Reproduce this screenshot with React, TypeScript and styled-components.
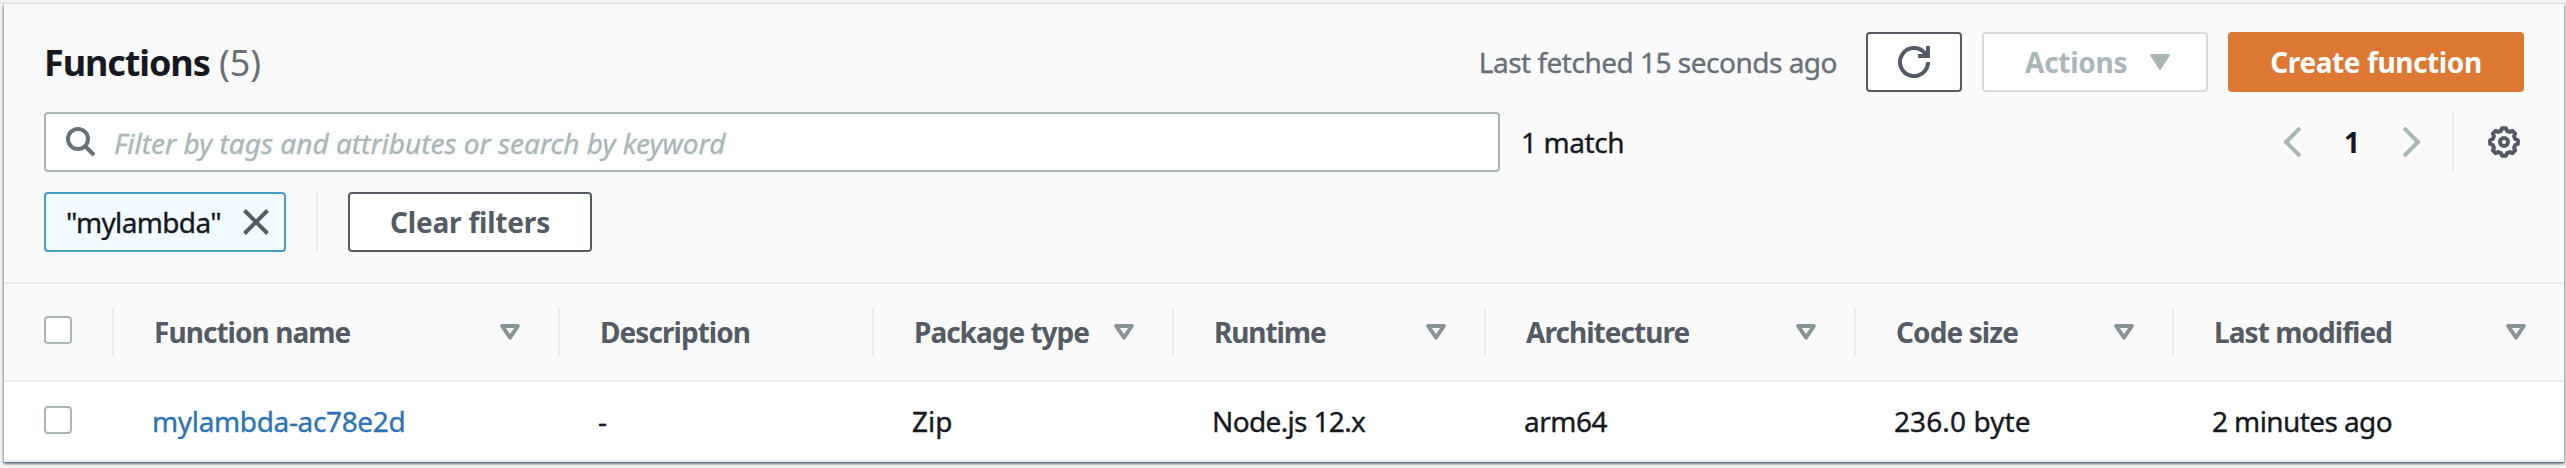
import React from "react";
import styled, { createGlobalStyle } from "styled-components";

const Global = createGlobalStyle`
  * { box-sizing: border-box; }
  body { margin: 0; background: #f2f3f3; font-family: "Noto Sans", sans-serif; font-size: 28px; line-height: 44px; color: #16191f; }
`;

const Page = styled.div`
  height: 468px;
  padding: 4px 2px 6px 4px;
  background: linear-gradient(#f2f3f3 2px, #eaeded 2px, #eaeded 4px, #f2f3f3 4px);
`;
const Panel = styled.section`
  height: 458px;
  background: #fff;
  box-shadow: 0 2px 2px rgba(0, 28, 36, 0.35), 2px 2px 2px rgba(0, 28, 36, 0.15), -2px 2px 2px rgba(0, 28, 36, 0.15), 0 0 0 1px #d5dbdb;
  border-bottom: 2px solid #eaeded;
`;
const Header = styled.header`
  height: 280px;
  padding: 28px 40px 0;
  background: #fafafa;
  border-bottom: 2px solid #eaeded;
`;
const Row = styled.div<{ $gap?: number }>`
  display: flex;
  align-items: center;
  height: 60px;
  margin-bottom: 20px;
  gap: ${(p) => p.$gap ?? 0}px;
`;
const Text = styled.span<{ $ls?: number }>`
  white-space: pre;
  letter-spacing: ${(p) => p.$ls ?? 0}px;
  -webkit-text-stroke: 0.35px currentColor;
`;
const Title = styled.h1`
  margin: 0 auto 0 0;
  padding-top: 2px;
  font-size: 36px;
  line-height: 44px;
  letter-spacing: -1.1px;
  white-space: pre;
  span { margin-left: 1px; font-weight: 400; color: #687078; letter-spacing: 0; }
`;
const Fetched = styled(Text)`
  color: #687078;
  margin-right: 9px;
`;
const Button = styled.button<{ $tone?: "primary" | "disabled"; $width: number }>`
  display: flex;
  align-items: center;
  justify-content: ${(p) => (p.$tone === "disabled" ? "space-between" : "center")};
  width: ${(p) => p.$width}px;
  height: 60px;
  padding: ${(p) => (p.$tone === "disabled" ? "0 36px 0 41px" : "0")};
  border-radius: 4px;
  font: 700 28px/44px "Noto Sans", sans-serif;
  border: 2px solid ${(p) => (p.$tone === "primary" ? "#dd7832" : p.$tone === "disabled" ? "#d5dbdb" : "#545b64")};
  background: ${(p) => (p.$tone === "primary" ? "#dd7832" : "#fff")};
  color: ${(p) => (p.$tone === "primary" ? "#fff" : p.$tone === "disabled" ? "#aab7b8" : "#545b64")};
  span { -webkit-text-stroke: 0; }
`;
const Search = styled.div`
  display: flex;
  align-items: center;
  width: 1456px;
  height: 60px;
  padding-left: 20px;
  gap: 18px;
  border: 2px solid #aab7b8;
  border-radius: 4px;
  background: #fff;
  color: #aab7b8;
  font-style: italic;
  span { padding-top: 2px; }
`;
const Matches = styled(Text)`
  margin: 0 auto 0 21px;
`;
const Pager = styled.nav`
  display: flex;
  align-items: center;
  margin-right: 4px;
  font-weight: 700;
`;
const PageNumber = styled.span`
  width: 100px;
  text-align: center;
`;
const Divider = styled.i<{ $height: number }>`
  width: 2px;
  height: ${(p) => p.$height}px;
  background: #eaeded;
`;
const PagerDivider = styled(Divider)`
  margin: 0 34px 0 30px;
`;
const Token = styled.div`
  display: flex;
  align-items: center;
  justify-content: space-between;
  width: 242px;
  height: 60px;
  padding: 0 14px 0 20px;
  border: 2px solid #44a0c8;
  border-radius: 4px;
  background: #f1faff;
`;
const Grid = styled.div<{ $head?: boolean }>`
  display: grid;
  grid-template-columns: 110px 446px 314px 300px 312px 370px 318px 1fr;
  align-items: center;
  height: ${(p) => (p.$head ? 98 : 78)}px;
  border-bottom: ${(p) => (p.$head ? "2px solid #eaeded" : "0")};
  background: ${(p) => (p.$head ? "#fafafa" : "#fff")};
`;
const HeadCell = styled.div`
  display: flex;
  align-items: center;
  justify-content: space-between;
  height: 48px;
  padding: 0 38px 0 40px;
  border-right: 2px solid #eaeded;
  font-weight: 700;
  color: #545b64;
  span { -webkit-text-stroke: 0; }
  &:last-child { border-right: 0; }
`;
const CheckCell = styled(HeadCell)<{ $plain?: boolean }>`
  padding: 0 0 ${(p) => (p.$plain ? 2 : 4)}px 40px;
  border-right-color: ${(p) => (p.$plain ? "transparent" : "#eaeded")};
`;
const Cell = styled.div`
  padding-left: 38px;
`;
const LinkText = styled(Text)`
  color: #2e73b8;
`;
const Check = styled.span`
  width: 28px;
  height: 28px;
  border: 2px solid #aab7b8;
  border-radius: 4px;
  background: #fff;
`;

const columns: { label: string; value: string; sort: boolean; hls: number; vls: number }[] = [
  { label: "Function name", value: "mylambda-ac78e2d", sort: true, hls: -0.95, vls: -0.35 },
  { label: "Description", value: "-", sort: false, hls: -0.95, vls: 0 },
  { label: "Package type", value: "Zip", sort: true, hls: -1, vls: 0 },
  { label: "Runtime", value: "Node.js 12.x", sort: true, hls: -1.1, vls: -0.65 },
  { label: "Architecture", value: "arm64", sort: true, hls: -0.95, vls: -0.5 },
  { label: "Code size", value: "236.0 byte", sort: true, hls: -0.9, vls: 0.1 },
  { label: "Last modified", value: "2 minutes ago", sort: true, hls: -0.95, vls: -0.6 },
];

const SortIcon = () => (
  <svg width="20" height="16" viewBox="0 0 20 16" fill="none" stroke="#879596" strokeWidth="4" strokeLinejoin="round">
    <path d="M2.200 2h15.600L10 13.600z" />
  </svg>
);

const gearPoints = Array.from({ length: 8 })
  .flatMap((_, i) =>
    [[-8, 14], [8, 14], [15, 11.600], [30, 11.600]].map(([offset, radius]) => {
      const angle = ((i * 45 + offset) * Math.PI) / 180;
      return `${(16 + radius * Math.sin(angle)).toFixed(2)},${(16 - radius * Math.cos(angle)).toFixed(2)}`;
    })
  )
  .join(" ");

const GearIcon = () => (
  <svg width="32" height="32" viewBox="0 0 32 32" fill="none" stroke="#545b64" strokeWidth="4" strokeLinejoin="round">
    <polygon points={gearPoints} />
    <circle cx="16" cy="16" r="4" />
  </svg>
);

export default function App() {
  return (
    <Page>
      <Global />
      <Panel>
        <Header>
          <Row $gap={20}>
            <Title>Functions <span>(5)</span></Title>
            <Fetched $ls={-0.5}>Last fetched 15 seconds ago</Fetched>
            <Button $width={96} aria-label="Refresh">
              <svg width="32" height="32" viewBox="0 0 32 32" fill="none" stroke="currentColor" strokeWidth="4">
                <path d="M30 16A14 14 0 1 1 26.500 6.800L28 9" />
                <path d="M30 0v10H20" />
              </svg>
            </Button>
            <Button $width={226} $tone="disabled">
              <Text $ls={-0.25}>Actions</Text>
              <svg width="20" height="16" viewBox="0 0 20 16" fill="currentColor" stroke="currentColor" strokeWidth="2" strokeLinejoin="round"><path d="M1 1h18l-9 14z" /></svg>
            </Button>
            <Button $width={296} $tone="primary"><Text $ls={-0.4}>Create function</Text></Button>
          </Row>
          <Row>
            <Search>
              <svg width="30" height="30" viewBox="0 0 30 30" fill="none" stroke="#687078" strokeWidth="4"><circle cx="12" cy="12" r="10" /><path d="M19 19l9 9" /></svg>
              <Text>Filter by tags and attributes or search by keyword</Text>
            </Search>
            <Matches $ls={-0.4}>1 match</Matches>
            <Pager>
              <svg width="20" height="32" viewBox="0 0 20 32" fill="none" stroke="#aab7b8" strokeWidth="4"><path d="M18 2L4 16l14 14" /></svg>
              <PageNumber>1</PageNumber>
              <svg width="20" height="32" viewBox="0 0 20 32" fill="none" stroke="#aab7b8" strokeWidth="4"><path d="M2 2l14 14L2 30" /></svg>
              <PagerDivider $height={60} />
              <GearIcon />
            </Pager>
          </Row>
          <Row $gap={30}>
            <Token>
              <Text $ls={-0.65}>"mylambda"</Text>
              <svg width="28" height="28" viewBox="0 0 28 28" stroke="#545b64" strokeWidth="4"><path d="M2.500 2.500l23 23M25.500 2.500l-23 23" /></svg>
            </Token>
            <Divider $height={60} />
            <Button $width={244}><Text $ls={-0.2}>Clear filters</Text></Button>
          </Row>
        </Header>
        <Grid $head>
          <CheckCell><Check /></CheckCell>
          {columns.map((c) => (
            <HeadCell key={c.label}>
              <Text $ls={c.hls}>{c.label}</Text>
              {c.sort && <SortIcon />}
            </HeadCell>
          ))}
        </Grid>
        <Grid>
          <CheckCell $plain><Check /></CheckCell>
          {columns.map((c, i) => (
            <Cell key={c.label}>
              {i === 0 ? <LinkText $ls={c.vls}>{c.value}</LinkText> : <Text $ls={c.vls}>{c.value}</Text>}
            </Cell>
          ))}
        </Grid>
      </Panel>
    </Page>
  );
}
